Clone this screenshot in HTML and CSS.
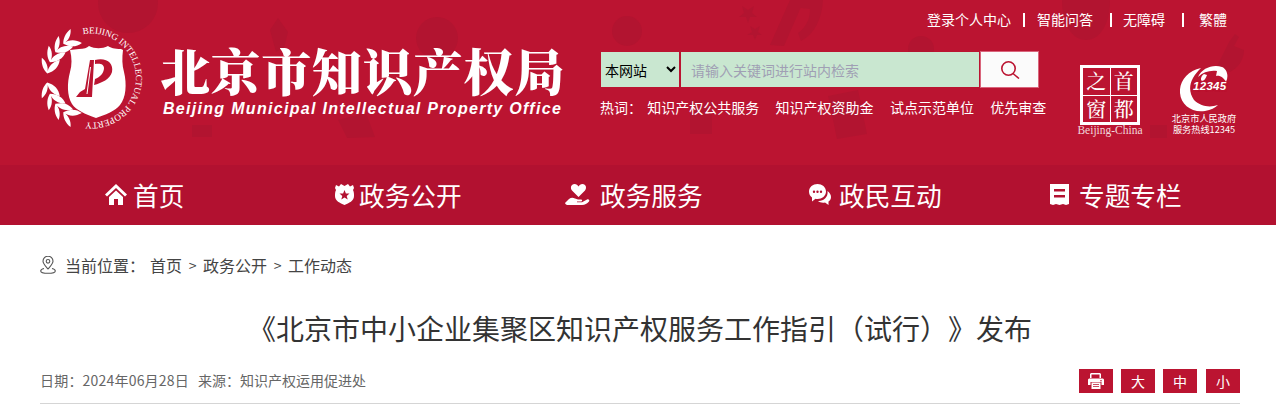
FILE: index.html
```html
<!DOCTYPE html>
<html lang="zh-CN">
<head>
<meta charset="utf-8">
<title>《北京市中小企业集聚区知识产权服务工作指引（试行）》发布</title>
<link rel="stylesheet" href="styles.css">
</head>
<body>
<header class="header">
  <svg class="watermark" viewBox="0 0 1276 165" aria-hidden="true">
    <g fill="#b21430">
      <circle cx="128" cy="3" r="30"/>
      <circle cx="437" cy="38" r="21"/>
      <path d="M338 120l28-7 9 24-28 1z"/>
      <path d="M270 30l8-12 10 14-4 16-8 4z"/>
      <ellipse cx="627" cy="31" rx="15" ry="15"/>
      <path d="M742 6l6 4 6-4-2 7 5 4-7 0-2 6-2-6-7 0 5-4z"/>
      <path d="M750 26l5 3 5-3-2 6 4 3-5 0-2 5-2-5-6 0 5-3z"/>
      <path d="M770 45l20-45 14 0-20 46z"/>
      <path d="M800 0h23c-1 18-8 34-22 41l-3-8c8-6 12-14 12-24l-10-1z"/>
      <circle cx="921" cy="49" r="13"/>
      <path d="M828 96l30-6 9 44-30 5z"/>
      <path d="M1062 0h48c0 24-10 40-24 40s-24-16-24-40z"/>
      <path d="M1215 70l14-28 6-8 4 3-5 9 10 4c0 10-6 18-14 22z"/>
      <path d="M690 100h22v34h-22z"/>
      <path d="M1150 125h17v13h-17z"/>
      <path d="M192 125h20v12h-20z"/>
    </g>
  </svg>
  <div class="header-inner">
    <a class="brand" href="#">
      <svg class="emblem" viewBox="0 0 104 104" aria-hidden="true">
        <defs>
          <path id="leaf" d="M7 51C3 48 0 43 0 36c5 3 8 9 7 15zM7 51c0-7 4-12 11-15 0 7-4 12-11 15z"/>
          <path id="ring" d="M43 7.300A44.500 44.500 0 1 1 43 94.700"/>
        </defs>
        <g fill="#fff">
          <use href="#leaf" transform="rotate(6 51 51)"/>
          <use href="#leaf" transform="rotate(21 51 51)"/>
          <use href="#leaf" transform="rotate(36 51 51)"/>
          <use href="#leaf" transform="rotate(51 51 51)"/>
          <use href="#leaf" transform="rotate(-6 51 51) translate(0 102) scale(1 -1)"/>
          <use href="#leaf" transform="rotate(-21 51 51) translate(0 102) scale(1 -1)"/>
          <use href="#leaf" transform="rotate(-36 51 51) translate(0 102) scale(1 -1)"/>
          <use href="#leaf" transform="rotate(-51 51 51) translate(0 102) scale(1 -1)"/>
          <path d="M30 23l9-1c5 0 8-1 10-3 6 3 13 3 19 0 3 2 6 3 13 3l2 1c-1 8-1 15 1 22 3 12 2 26-4 33-5 6-15 10-24 13-11-4-20-8-24-14-5-8-5-21-2-32 2-7 2-14 0-22z"/>
        </g>
        <g fill="#bb1431">
          <path d="M50 33h4l-2 37H36l4-5 5-3z"/>
          <path d="M55 33c11-3 19 3 17 12-2 7-10 11-18 13l1-6c5-2 9-6 9-11 0-4-4-5-9-4z"/>
        </g>
        <path class="emblem-sliver" d="M50.500 40L47 67"/>
        <text class="ring-text"><textPath href="#ring">BEIJING INTELLECTUAL PROPERTY</textPath></text>
      </svg>
      <span class="brand-text">
        <span class="brand-cn">北京市知识产权局</span>
        <span class="brand-en">Beijing Municipal Intellectual Property Office</span>
      </span>
    </a>
    <div class="tools">
      <ul class="toplinks">
        <li><a href="#">登录个人中心</a></li>
        <li><a href="#">智能问答</a></li>
        <li><a href="#">无障碍</a></li>
        <li><a href="#">繁體</a></li>
      </ul>
      <div class="tools-row">
        <div class="search-block">
          <form class="search">
            <select class="search-scope"><option>本网站</option></select>
            <input class="search-input" type="text" placeholder="请输入关键词进行站内检索">
            <button class="search-btn" type="button" aria-label="搜索">
              <svg class="search-icon" viewBox="0 0 20 18"><circle cx="8.500" cy="7.500" r="6.700"/><path d="M13 12.500l6 5"/></svg>
            </button>
          </form>
          <div class="hot">
            <span class="hot-label">热词：</span>
            <a href="#">知识产权公共服务</a>
            <a href="#">知识产权资助金</a>
            <a href="#">试点示范单位</a>
            <a href="#">优先审查</a>
          </div>
        </div>
        <a class="capital" href="#">
          <span class="capital-grid">
            <span>之</span><span>首</span><span>窗</span><span>都</span>
          </span>
          <span class="capital-en">Beijing-China</span>
        </a>
        <a class="hotline" href="#">
          <span class="hotline-mark">
            <svg class="hotline-swoosh" viewBox="0 0 48 46" aria-hidden="true">
              <path d="M21 2C7 5-1 16 0 27c1 12 12 20 25 18 6-1 10-3 13-6-9 3-18 1-24-5-5-7-5-15-1-22 2-4 5-7 8-10z"/>
              <path d="M18 11c4-9 15-13 24-10 5 2 7 9 4 15-2-4-6-7-10-6l1-5c-7-1-14 1-19 6z"/>
              <path d="M24 8c-3 2-4 6-2 7 2 0 4-3 5-6z"/>
            </svg>
            <span class="hotline-num">12345</span>
          </span>
          <span class="hotline-text">北京市人民政府<br>服务热线12345</span>
        </a>
      </div>
    </div>
  </div>
</header>

<nav class="nav">
  <a href="#">
    <svg class="nav-icon icon-home" viewBox="0 0 22 21"><path d="M11 0L0 10.500l2 2L11 4l9 8.500 2-2zM11 6.500L4 13v8h5v-6h4v6h5v-8z"/></svg>
    <span>首页</span>
  </a>
  <a href="#">
    <svg class="nav-icon icon-shield" viewBox="0 0 19 21"><path fill-rule="evenodd" d="M1 1l3 1.500L6 0l3.500 2L13 0l2 2.500L18 1l1 3-1 2c1 2 1 4 1 6 0 5-5 7-9.500 9C5 19 0 17 0 12c0-2 0-4 1-6L0 4zM9.500 6l-1.400 3.400-3.600.2 2.800 2.300-1 3.500 3.200-2 3.200 2-1-3.500 2.800-2.300-3.600-.2z"/></svg>
    <span>政务公开</span>
  </a>
  <a href="#">
    <svg class="nav-icon icon-hand" viewBox="0 0 27 21"><path d="M13.500 13L7 6.500C5 4 6 0 9.500 0c2 0 3 1 4 2.500 1-1.500 2-2.500 4-2.500C21 0 22 4 20 6.500z"/><path d="M0 19l4-4c2-1.500 4-1.500 6-.5l3 1h3c1.500 0 1.500 2 0 2h-4v.8h5l5-2.800c1.500-.8 3 .5 2 2-2 2-4 3.500-7 3.500H3c-1.500 0-2.500-.5-3-2z"/></svg>
    <span>政务服务</span>
  </a>
  <a href="#">
    <svg class="nav-icon icon-chat" viewBox="0 0 22 21"><path fill-rule="evenodd" d="M8.500 0C13 0 17 3 17 7.500S13 15 8.500 15c-.7 0-1.300 0-2-.2L3 17.500v-4C1 12 0 10 0 7.500 0 3 4 0 8.500 0zM5 6.500a1.200 1.200 0 1 0 0 2.400 1.200 1.200 0 0 0 0-2.400zm3.500 0a1.200 1.200 0 1 0 0 2.400 1.200 1.200 0 0 0 0-2.400zm3.500 0a1.200 1.200 0 1 0 0 2.400 1.200 1.200 0 0 0 0-2.400z"/><path d="M18.500 7c2 1.500 3.500 3.500 3.500 6 0 2-1 3.500-2.500 4.500V21l-3.500-2.500c-2.500.5-5.500 0-7-1.500 5 .5 10.500-3.500 9.500-10z"/></svg>
    <span>政民互动</span>
  </a>
  <a href="#">
    <svg class="nav-icon icon-doc" viewBox="0 0 19 21"><path fill-rule="evenodd" d="M0 0h19v20l-3 1-3-1-3.500 1L6 20l-3 1-3-1zM4 5v2.500h11V5zm0 6v2.500h11V11z"/></svg>
    <span>专题专栏</span>
  </a>
</nav>

<main class="main">
  <div class="crumbs">
    <svg class="pin" viewBox="0 0 16 18" aria-hidden="true"><path d="M8 13C5 9.500 3 7.500 3 5.200a5 5 0 0 1 10 0C13 7.500 11 9.500 8 13z"/><circle cx="8" cy="5.300" r="1.800"/><path d="M4 12.500c-2 .5-3.300 1.500-3.300 2.500 0 1.400 3 2.300 7.300 2.300s7.300-.9 7.300-2.300c0-1-1.300-2-3.300-2.500"/></svg>
    <span class="crumbs-label">当前位置：</span>
    <a href="#">首页</a><span class="crumbs-sep">&gt;</span><a href="#">政务公开</a><span class="crumbs-sep">&gt;</span><a href="#">工作动态</a>
  </div>
  <h1 class="title">《北京市中小企业集聚区知识产权服务工作指引（试行）》发布</h1>
  <div class="meta">
    <div class="meta-text"><span class="meta-date">日期：2024年06月28日</span><span>来源：知识产权运用促进处</span></div>
    <div class="meta-tools">
      <button class="tool" type="button" aria-label="打印">
        <svg class="print" viewBox="0 0 16 16"><path d="M3 0h9l1 1v4h-1.500V1.500h-8V5H2V1z"/><path fill-rule="evenodd" d="M1 5.500h14l1 1V12h-2.500V9h-11v3H0V6.500zM13 7a.8.800 0 1 0 0 1.600A.8.800 0 0 0 13 7z"/><path fill-rule="evenodd" d="M3.500 9.500h9V16h-9zM5 11v.8h6V11zm0 2v.8h6V13z"/></svg>
      </button>
      <button class="tool" type="button">大</button>
      <button class="tool" type="button">中</button>
      <button class="tool tool-last" type="button">小</button>
    </div>
  </div>
</main>
</body>
</html>
```
FILE: styles.css
```css
* { box-sizing: border-box; }
html, body { margin: 0; padding: 0; }
body {
  background: #fff;
  color: #333;
  font-family: "Noto Sans CJK SC", "Liberation Sans", sans-serif;
  text-spacing-trim: space-all;
  overflow: hidden;
}
a { color: inherit; text-decoration: none; }
ul { list-style: none; margin: 0; padding: 0; }

.header {
  position: relative;
  height: 165px;
  background: #bb1431;
  color: #fff;
  overflow: hidden;
}
.watermark {
  position: absolute;
  left: 0;
  top: 0;
  width: 1276px;
  height: 165px;
}
.header-inner {
  position: relative;
  display: flex;
  height: 165px;
  padding-left: 40px;
}

.brand {
  display: flex;
  width: 560px;
  padding-top: 27px;
}
.emblem { width: 104px; height: 104px; flex: none; overflow: visible; }
.emblem-sliver { fill: none; stroke: #fff; stroke-width: 1; }
.ring-text {
  fill: #fff;
  font-family: "Liberation Serif", serif;
  font-size: 9.200px;
}
.brand-text {
  display: flex;
  flex-direction: column;
  margin-left: 16px;
}
.brand-cn {
  font-family: "Noto Serif CJK SC", "Noto Sans CJK SC", serif;
  font-weight: 900;
  font-size: 50px;
  line-height: 58px;
  letter-spacing: .6px;
  margin-top: 13px;
  white-space: nowrap;
}
.brand-en {
  font-family: "Liberation Sans", sans-serif;
  font-weight: 700;
  font-style: italic;
  font-size: 16px;
  line-height: 20px;
  letter-spacing: 1.300px;
  margin: 1px 0 0 3px;
  white-space: nowrap;
}

.tools { width: 676px; }
.toplinks {
  display: flex;
  justify-content: flex-end;
  padding: 10px 49px 0 0;
  height: 51px;
  font-size: 14px;
  line-height: 18px;
}
.toplinks li { position: relative; padding-left: 26px; }
.toplinks li + li::before {
  content: "";
  position: absolute;
  left: 12px;
  top: 3px;
  width: 2px;
  height: 14px;
  background: #fff;
}
.toplinks li:nth-child(3) { padding-left: 30px; }
.toplinks li:nth-child(3)::before { left: 17px; }
.toplinks li:last-child { padding-left: 34px; }
.toplinks li:last-child::before { left: 17px; }

.tools-row { display: flex; }
.search-block { width: 439px; }
.search {
  display: flex;
  align-items: center;
  height: 37px;
}
.search-scope {
  width: 78px;
  height: 35px;
  margin-left: 1px;
  border: 0;
  border-radius: 0;
  background-color: #c9e7d0;
  color: #000;
  font-family: inherit;
  font-size: 14px;
}
.search-input {
  width: 298px;
  height: 35px;
  margin-left: 2px;
  padding: 0 10px;
  border: 0;
  border-radius: 0;
  background: #c9e7d0;
  font-family: inherit;
  font-size: 14px;
  outline: none;
}
.search-input::placeholder { color: #a09fb4; opacity: 1; }
.search-btn {
  display: flex;
  align-items: center;
  justify-content: center;
  width: 59px;
  height: 37px;
  margin-left: 1px;
  padding: 0;
  background: #fbfbfb;
  border: 1px solid #d9657c;
}
.search-icon {
  width: 20px;
  height: 18px;
  fill: none;
  stroke: #bb1431;
  stroke-width: 1.600;
}
.hot {
  display: flex;
  gap: 16.300px;
  margin-top: 9px;
  font-size: 14px;
  line-height: 20px;
  white-space: nowrap;
}
.hot-label { width: 31px; }

.capital {
  display: flex;
  flex-direction: column;
  align-items: center;
  width: 66px;
  margin: 14px 0 0 38px;
}
.capital-grid {
  display: grid;
  grid-template-columns: 1fr 1fr;
  grid-template-rows: 1fr 1fr;
  gap: 1px;
  width: 60px;
  height: 60px;
  padding: 3px;
  background: #fff;
}
.capital-grid span {
  display: flex;
  align-items: center;
  justify-content: center;
  background: #bb1431;
  font-family: "Noto Serif CJK SC", "Noto Sans CJK SC", serif;
  font-weight: 500;
  font-size: 20px;
  line-height: 1;
}
.capital-en {
  font-family: "Liberation Serif", serif;
  font-size: 11.500px;
  line-height: 12px;
  margin-top: -1px;
  color: #f0d6da;
  white-space: nowrap;
}

.hotline {
  display: flex;
  flex-direction: column;
  align-items: center;
  width: 66px;
  margin: 15px 0 0 26px;
}
.hotline-mark {
  position: relative;
  display: block;
  width: 50px;
  height: 48px;
  margin-left: 6px;
}
.hotline-swoosh {
  width: 48px;
  height: 46px;
  fill: #fff;
}
.hotline-num {
  position: absolute;
  left: 13px;
  top: 13px;
  font-family: "Liberation Sans", sans-serif;
  font-weight: 700;
  font-style: italic;
  font-size: 11.500px;
  line-height: 14px;
  letter-spacing: .3px;
  color: #fff;
  text-shadow: 0 0 2px #bb1431, 0 0 2px #bb1431, 0 0 2px #bb1431;
}
.hotline-text {
  display: block;
  margin: -1px 0 0 4px;
  font-size: 9.200px;
  line-height: 11px;
  text-align: center;
  white-space: nowrap;
}

.nav {
  display: grid;
  grid-template-columns: 230px 230px 244px 241px 1fr;
  height: 60px;
  padding: 0 0 1px 105px;
  background: #b21130;
  color: #fff;
  font-size: 25.700px;
}
.nav a {
  display: flex;
  align-items: center;
  line-height: 59px;
  white-space: nowrap;
}
.nav-icon { flex: none; height: 21px; fill: #fff; margin-right: 8px; }
.icon-home { width: 22px; margin-right: 6px; }
.icon-shield { width: 19px; margin-right: 5px; }
.icon-hand { width: 27px; }
.icon-chat { width: 22px; }
.icon-doc { width: 19px; margin-right: 10px; }

.main { padding: 0 36px 0 40px; }
.crumbs {
  display: flex;
  align-items: center;
  height: 22px;
  margin-top: 29px;
  font-size: 16px;
  color: #444;
  white-space: nowrap;
}
.pin {
  width: 16px;
  height: 18px;
  margin-right: 9px;
  fill: none;
  stroke: #555;
  stroke-width: 1.100;
}
.crumbs-label { width: 85px; }
.crumbs-sep {
  width: 21px;
  text-align: center;
  font-size: 14px;
}
.title {
  margin: 32px 0 0;
  font-size: 28px;
  font-weight: 400;
  line-height: 40px;
  text-align: center;
  color: #333;
  white-space: nowrap;
}
.meta {
  display: flex;
  justify-content: space-between;
  align-items: center;
  margin-top: 21px;
  padding-bottom: 10px;
  border-bottom: 1px solid #d5d5d5;
}
.meta-text {
  display: flex;
  gap: 9px;
  padding-bottom: 2px;
  font-size: 14px;
  color: #666;
}
.meta-date { letter-spacing: .2px; }
.meta-tools { display: flex; gap: 8px; }
.tool {
  display: flex;
  align-items: center;
  justify-content: center;
  width: 34px;
  height: 24px;
  padding: 0;
  border: 0;
  background: #bb1431;
  color: #fff;
  font-family: inherit;
  font-size: 14px;
}
.tool-last { margin-left: 1px; }
.print { width: 16px; height: 16px; fill: #fff; }
```
